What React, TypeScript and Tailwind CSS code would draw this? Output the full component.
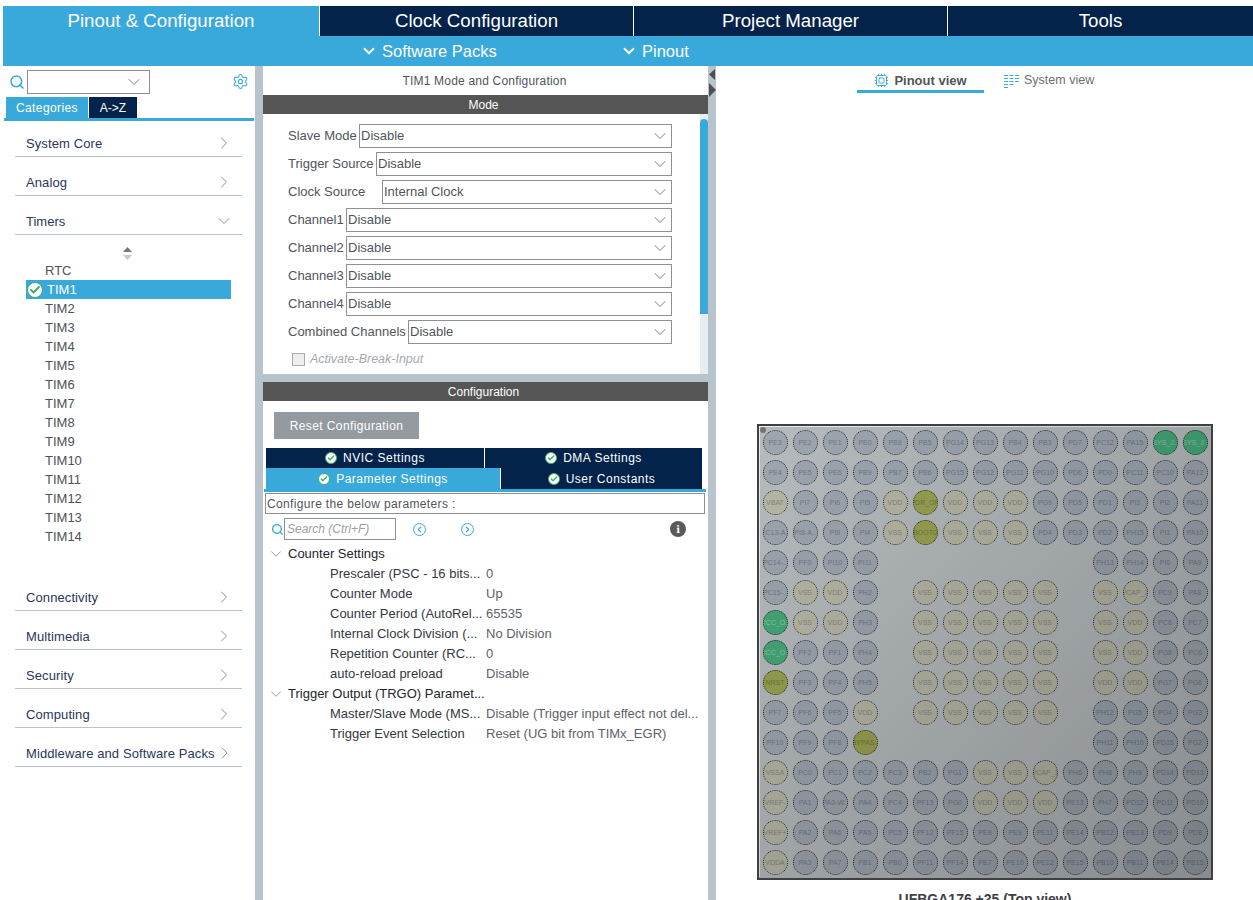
import { ChevronDown, ChevronRight, ChevronLeft, Check, Cpu, Search, Settings } from "lucide-react"

const categories = ["System Core", "Analog"]
const categoriesBelow = ["Connectivity", "Multimedia", "Security", "Computing", "Middleware and Software Packs"]
const timers = ["RTC", "TIM1", "TIM2", "TIM3", "TIM4", "TIM5", "TIM6", "TIM7", "TIM8", "TIM9", "TIM10", "TIM11", "TIM12", "TIM13", "TIM14"]

const modeRows = [
    { label: "Slave Mode", value: "Disable", width: "w-[71px]" },
    { label: "Trigger Source", value: "Disable", width: "w-[88px]" },
    { label: "Clock Source", value: "Internal Clock", width: "w-[94px]" },
    { label: "Channel1", value: "Disable", width: "w-[58px]" },
    { label: "Channel2", value: "Disable", width: "w-[58px]" },
    { label: "Channel3", value: "Disable", width: "w-[58px]" },
    { label: "Channel4", value: "Disable", width: "w-[58px]" },
    { label: "Combined Channels", value: "Disable", width: "w-[120px]" },
]

const counterParams = [
    ["Prescaler (PSC - 16 bits...", "0"],
    ["Counter Mode", "Up"],
    ["Counter Period (AutoRel...", "65535"],
    ["Internal Clock Division (...", "No Division"],
    ["Repetition Counter (RC...", "0"],
    ["auto-reload preload", "Disable"],
]

const triggerParams = [
    ["Master/Slave Mode (MS...", "Disable (Trigger input effect not del..."],
    ["Trigger Event Selection", "Reset (UG bit from TIMx_EGR)"],
]

const pinRows = [
    "PE3 PE2 PE1 PE0 PB8 PB5 PG14 PG13 PB4 PB3 PD7 PC12 PA15 SYS_J.. SYS_J..",
    "PE4 PE5 PE6 PB9 PB7 PB6 PG15 PG12 PG11 PG10 PD6 PD0 PC11 PC10 PA12",
    "VBAT PI7 PI6 PI5 VDD PDR_ON VDD VDD VDD PG9 PD5 PD1 PI3 PI2 PA11",
    "PC13-A.. PI8-A.. PI9 PI4 VSS BOOT0 VSS VSS VSS PD4 PD3 PD2 PH15 PI1 PA10",
    "PC14-.. PF0 PI10 PI11 . . . . . . . PH13 PH14 PI0 PA9",
    "PC15-.. VSS VDD PH2 . VSS VSS VSS VSS VSS . VSS VCAP_2 PC9 PA8",
    "RCC_O.. VSS VDD PH3 . VSS VSS VSS VSS VSS . VSS VDD PC8 PC7",
    "RCC_O.. PF2 PF1 PH4 . VSS VSS VSS VSS VSS . VSS VDD PG8 PC6",
    "NRST PF3 PF4 PH5 . VSS VSS VSS VSS VSS . VDD VDD PG7 PG6",
    "PF7 PF6 PF5 VDD . VSS VSS VSS VSS VSS . PH12 PG5 PG4 PG3",
    "PF10 PF9 PF8 BYPAS.. . . . . . . . PH11 PH10 PD15 PG2",
    "VSSA PC0 PC1 PC2 PC3 PB2 PG1 VSS VSS VCAP_1 PH6 PH8 PH9 PD14 PD13",
    "VREF- PA1 PA0-W.. PA4 PC4 PF13 PG0 VDD VDD VDD PE13 PH7 PD12 PD11 PD10",
    "VREF+ PA2 PA6 PA5 PC5 PF12 PF15 PE8 PE9 PE11 PE14 PB12 PB13 PD9 PD8",
    "VDDA PA3 PA7 PB1 PB0 PF11 PF14 PE7 PE10 PE12 PE15 PB10 PB11 PB14 PB15",
]

function pinColor(name: string) {
    if (/^(RCC|SYS)/.test(name)) return "bg-[#46a878] text-[#86cba6]"
    if (/^(PDR|BOOT|NRST|BYPAS)/.test(name)) return "bg-[#9aa352] text-[#70773c]"
    if (/^(VDD|VSS|VBAT|VREF|VCAP)/.test(name)) return "bg-[#b7b8a7] text-[#85867a]"
    return "bg-[#9ea6b0] text-[#727983]"
}

function Pin({ name }: { name: string }) {
    if (name === ".") return <div />
    return (
        <div className="flex h-[30px] w-[30px] items-center justify-center">
            <div className={`flex h-[25px] w-[25px] shrink-0 items-center justify-center overflow-hidden whitespace-nowrap rounded-full border border-dotted border-[#2a2a2a] text-[7px] leading-none tracking-normal ${pinColor(name)}`}>
                {name}
            </div>
        </div>
    )
}

function CheckBadge({ size }: { size: string }) {
    return (
        <span className={`flex shrink-0 items-center justify-center rounded-full border border-[#3fae6a] bg-white ${size}`}>
            <Check className="h-full w-full p-[1px] text-[#3fae6a]" strokeWidth={4} />
        </span>
    )
}

function ModeSelect({ label, value, width }: { label: string; value: string; width: string }) {
    return (
        <div className="flex h-[28px] items-start">
            <div className={`h-[23px] shrink-0 whitespace-nowrap leading-[23px] text-[#50555b] ${width}`}>{label}</div>
            <div className="flex h-[24px] flex-1 items-center justify-between border border-[#8d9195] pl-[1px] pr-[1px] text-[#50555b]">
                <span>{value}</span>
                <ChevronDown className="h-5 w-5 text-[#666]" strokeWidth={1} />
            </div>
        </div>
    )
}

function CategoryRow({ label, first }: { label: string; first?: boolean }) {
    return (
        <div className={`flex items-end border-b border-[#b8c4cb] pl-[11px] pr-[8px] tracking-[0.1px] text-[#27375a] ${first ? "h-[36px]" : "h-[39px]"}`}>
            <div className="mb-[2px] flex h-[20px] w-full items-center justify-between whitespace-nowrap">
                <span>{label}</span>
                <ChevronRight className="-mt-[3px] h-5 w-5 text-[#777]" strokeWidth={1} />
            </div>
        </div>
    )
}

function ConfigTab({ label, active, className }: { label: string; active?: boolean; className: string }) {
    return (
        <div className={`flex items-center justify-center gap-[6px] text-white ${active ? "bg-[#39a9dc]" : "bg-[#03234b]"} ${className}`}>
            <CheckBadge size="h-[12px] w-[12px]" />
            <span>{label}</span>
        </div>
    )
}

function ParamRow({ name, value }: { name: string; value: string }) {
    return (
        <div className="flex h-[20px] items-center whitespace-nowrap pl-[67px]">
            <div className="w-[156px] shrink-0 text-[#33383f]">{name}</div>
            <div className="text-[#5d6268]">{value}</div>
        </div>
    )
}

function SystemViewIcon() {
    return (
        <svg width="15" height="14" viewBox="0 0 15 14" className="text-[#39a9dc]" fill="none" stroke="currentColor" strokeWidth="1">
            <path d="M0 1.500h4M5.500 1.500h4M11 1.500h4M0 4.500h4M5.500 4.500h4M11 4.500h4M0 7.500h4M5.500 7.500h4M11 7.500h4M0 10.500h4M5.500 10.500h4M0 13.500h4" />
        </svg>
    )
}

export default function App() {
    return (
        <div className="h-[900px] w-[1253px] overflow-hidden bg-white font-['Liberation_Sans',Arial,sans-serif] text-[13px]">
            <div className="pl-[3px] pt-[6px]">
                <div className="flex h-[30px] bg-white text-[18.7px] text-white">
                    <div className="flex w-[316px] items-center justify-center bg-[#39a9dc]">Pinout &amp; Configuration</div>
                    <div className="ml-[1px] flex w-[313px] items-center justify-center bg-[#03234b]">Clock Configuration</div>
                    <div className="ml-[1px] flex w-[313px] items-center justify-center bg-[#03234b]">Project Manager</div>
                    <div className="ml-[1px] flex flex-1 items-center justify-center bg-[#03234b]">Tools</div>
                </div>
                <div className="flex h-[30px] items-center bg-[#39a9dc] text-[16.500px] text-white">
                    <div className="ml-[357px] flex w-[260px] items-center gap-[4px]">
                        <ChevronDown className="h-[18px] w-[18px]" strokeWidth={2.5} />
                        Software Packs
                    </div>
                    <div className="flex items-center gap-[4px]">
                        <ChevronDown className="h-[18px] w-[18px]" strokeWidth={2.5} />
                        Pinout
                    </div>
                </div>
            </div>

            <div className="flex h-[834px]">
                {/* left tree */}
                <div className="w-[255px] shrink-0">
                    <div className="flex h-[31px] items-center pl-[9px] pr-[6px]">
                        <Search className="h-[16px] w-[16px] text-[#39a9dc]" strokeWidth={2.25} />
                        <div className="ml-[2px] flex h-[24px] w-[123px] items-center justify-end border border-[#8d9195] pr-[5px]">
                            <ChevronDown className="h-5 w-5 text-[#666]" strokeWidth={1} />
                        </div>
                        <Settings className="ml-auto h-[17px] w-[17px] text-[#39a9dc]" strokeWidth={1.5} />
                    </div>
                    <div className="flex h-[21px] gap-[1px] pl-[6px] text-[12px]">
                        <div className="flex w-[82px] items-center justify-center bg-[#39a9dc] tracking-[0.4px] text-white">Categories</div>
                        <div className="flex w-[48px] items-center justify-center bg-[#03234b] text-white">A-&gt;Z</div>
                    </div>
                    <div className="ml-[4px] h-[3px] w-[250px] bg-[#39a9dc]" />

                    <div className="w-[242px] pl-[15px]">
                        {categories.map((c, i) => (
                            <CategoryRow key={c} label={c} first={i === 0} />
                        ))}
                        <div className="flex h-[39px] items-end border-b border-[#b8c4cb] pl-[11px] pr-[8px] text-[#27375a]">
                            <div className="mb-[2px] flex h-[20px] w-full items-center justify-between">
                                <span>Timers</span>
                                <ChevronDown className="-mt-[3px] h-5 w-5 text-[#777]" strokeWidth={1} />
                            </div>
                        </div>
                        <div className="h-[337px] pl-[11px]">
                            <div className="flex h-[26px] w-[203px] items-end justify-center pb-[1px]">
                                <svg width="9" height="13" viewBox="0 0 9 13">
                                    <path d="M4.500 0 9 5H0z" fill="#777" />
                                    <path d="M0 8h9l-4.500 5z" fill="#c9c9c9" />
                                </svg>
                            </div>
                            {timers.map((t) => (
                                <div
                                    key={t}
                                    className={`flex h-[19px] w-[205px] items-center ${t === "TIM1" ? "bg-[#39a9dc] pl-[1px] text-white" : "pl-[19px] text-[#4d5257]"}`}
                                >
                                    {t === "TIM1" && <span className="mr-[4px]"><CheckBadge size="h-[16px] w-[16px]" /></span>}
                                    {t}
                                </div>
                            ))}
                        </div>
                        {categoriesBelow.map((c) => (
                            <CategoryRow key={c} label={c} />
                        ))}
                    </div>
                </div>

                <div className="w-[8px] shrink-0 bg-[#b8c4cb]" />

                {/* middle panel */}
                <div className="flex w-[445px] shrink-0 flex-col">
                    <div className="flex h-[29px] items-center justify-center pr-[2px] text-[12px] tracking-[0.2px] text-[#50555b]">TIM1 Mode and Configuration</div>
                    <div className="flex h-[19px] items-center justify-center bg-[#545554] pr-[4px] text-[12px] text-white">Mode</div>
                    <div className="flex h-[260px]">
                        <div className="flex-1 pl-[25px] pr-[28px] pt-[10px]">
                            {modeRows.map((r) => (
                                <ModeSelect key={r.label} label={r.label} value={r.value} width={r.width} />
                            ))}
                            <div className="flex items-center gap-[5px] whitespace-nowrap pl-[4px] pt-[2px] text-[12.500px] italic text-[#a5a9ad]">
                                <span className="h-[13px] w-[13px] shrink-0 border border-[#aaa] bg-[#eee]" />
                                Activate-Break-Input
                            </div>
                        </div>
                        <div className="w-[8px] bg-[#e8edf0] pt-[5px]">
                            <div className="h-[195px] rounded-t-[4px] bg-[#39a9dc]" />
                        </div>
                    </div>
                    <div className="h-[8px] bg-[#b8c4cb]" />
                    <div className="flex h-[19px] items-center justify-center bg-[#545554] pr-[4px] text-[12px] text-white">Configuration</div>
                    <div className="pl-[11px] pt-[11px]">
                        <div className="flex h-[27px] w-[145px] items-center justify-center bg-[#939aa0] text-[12px] tracking-[0.4px] text-white">Reset Configuration</div>
                    </div>
                    <div className="ml-[3px] mt-[9px] flex h-[20px] w-[436px] gap-[1px] text-[12px] tracking-[0.5px]">
                        <ConfigTab label="NVIC Settings" className="w-[218px]" />
                        <ConfigTab label="DMA Settings" className="flex-1" />
                    </div>
                    <div className="ml-[3px] flex h-[21px] w-[436px] gap-[1px] text-[12px] tracking-[0.5px]">
                        <ConfigTab label="Parameter Settings" active className="w-[234px]" />
                        <ConfigTab label="User Constants" className="flex-1" />
                    </div>
                    <div className="ml-[1px] h-[3px] w-[442px] bg-[#39a9dc]" />
                    <div className="ml-[2px] mt-[1px] flex h-[21px] w-[440px] items-center border border-[#8d9195] pl-[1px] text-[12px] tracking-[0.35px] text-[#50555b]">
                        Configure the below parameters :
                    </div>
                    <div className="flex h-[26px] items-center pl-[8px] pt-[4px]">
                        <Search className="h-[13px] w-[13px] text-[#39a9dc]" strokeWidth={2.5} />
                        <div className="ml-[0px] flex h-[22px] w-[112px] items-center border border-[#8d9195] pl-[2px] text-[12px] italic text-[#9ba0a5]">Search (Ctrl+F)</div>
                        <span className="ml-[17px] flex h-[13px] w-[13px] items-center justify-center rounded-full border border-[#39a9dc]">
                            <ChevronLeft className="h-[9px] w-[9px] text-[#39a9dc]" strokeWidth={3} />
                        </span>
                        <span className="ml-[35px] flex h-[13px] w-[13px] items-center justify-center rounded-full border border-[#39a9dc]">
                            <ChevronRight className="h-[9px] w-[9px] text-[#39a9dc]" strokeWidth={3} />
                        </span>
                        <span className="ml-[196px] flex h-[16px] w-[16px] items-center justify-center rounded-full bg-[#5a5a5a] font-serif text-[12px] font-bold text-white">
                            i
                        </span>
                    </div>
                    <div className="mt-[4px] flex h-[20px] items-center pl-[4px] text-[#22262b]">
                        <ChevronDown className="mr-[3px] h-[18px] w-[18px] text-[#777]" strokeWidth={1} />
                        Counter Settings
                    </div>
                    {counterParams.map(([n, v]) => (
                        <ParamRow key={n} name={n} value={v} />
                    ))}
                    <div className="flex h-[20px] items-center whitespace-nowrap pl-[4px] text-[#22262b]">
                        <ChevronDown className="mr-[3px] h-[18px] w-[18px] text-[#777]" strokeWidth={1} />
                        Trigger Output (TRGO) Paramet...
                    </div>
                    {triggerParams.map(([n, v]) => (
                        <ParamRow key={n} name={n} value={v} />
                    ))}
                </div>

                <div className="flex w-[8px] shrink-0 flex-col bg-[#b8c4cb] pt-[3px]">
                    <svg width="8" height="30" viewBox="0 0 8 30">
                        <path d="M7 0v11L1 5.500z" fill="#4f4f4f" />
                        <path d="M1 14v14l7-7z" fill="#4f4f4f" />
                    </svg>
                </div>

                {/* right panel */}
                <div className="flex-1">
                    <div className="flex h-[27px] items-end pl-[141px]">
                        <div className="flex h-[27px] w-[127px] items-center justify-center gap-[5px] border-b-[3px] border-[#39a9dc] pt-[5px] text-[13px] font-bold text-[#50555b]">
                            <Cpu className="h-[15px] w-[15px] text-[#39a9dc]" strokeWidth={1.5} />
                            Pinout view
                        </div>
                        <div className="ml-[20px] flex h-[27px] items-center gap-[5px] pb-[3px] pt-[5px] text-[12.500px] text-[#6a6f74]">
                            <SystemViewIcon />
                            System view
                        </div>
                    </div>
                    <div className="relative ml-[41px] mt-[331px] h-[456px] w-[456px] border-2 border-[#3e4042] bg-[#b6bbbe]">
                        <div className="border-l border-t border-[#e9ecee]">
                            <div className="grid grid-cols-[repeat(15,30px)] grid-rows-[repeat(15,30px)]">
                                {pinRows.flatMap((row, r) =>
                                    row.split(" ").map((name, c) => <Pin key={`${r}-${c}`} name={name} />)
                                )}
                            </div>
                        </div>
                        <div className="absolute left-[1px] top-[1px] h-[6px] w-[6px] rounded-full bg-[#6f7377]" />
                        <div className="pointer-events-none absolute inset-0 bg-linear-to-br from-black/0 to-black/25" />
                    </div>
                    <div className="ml-[41px] mt-[9px] w-[456px] text-center text-[14px] font-bold text-[#3d4145]">UFBGA176 +25 (Top view)</div>
                </div>
            </div>
        </div>
    )
}
